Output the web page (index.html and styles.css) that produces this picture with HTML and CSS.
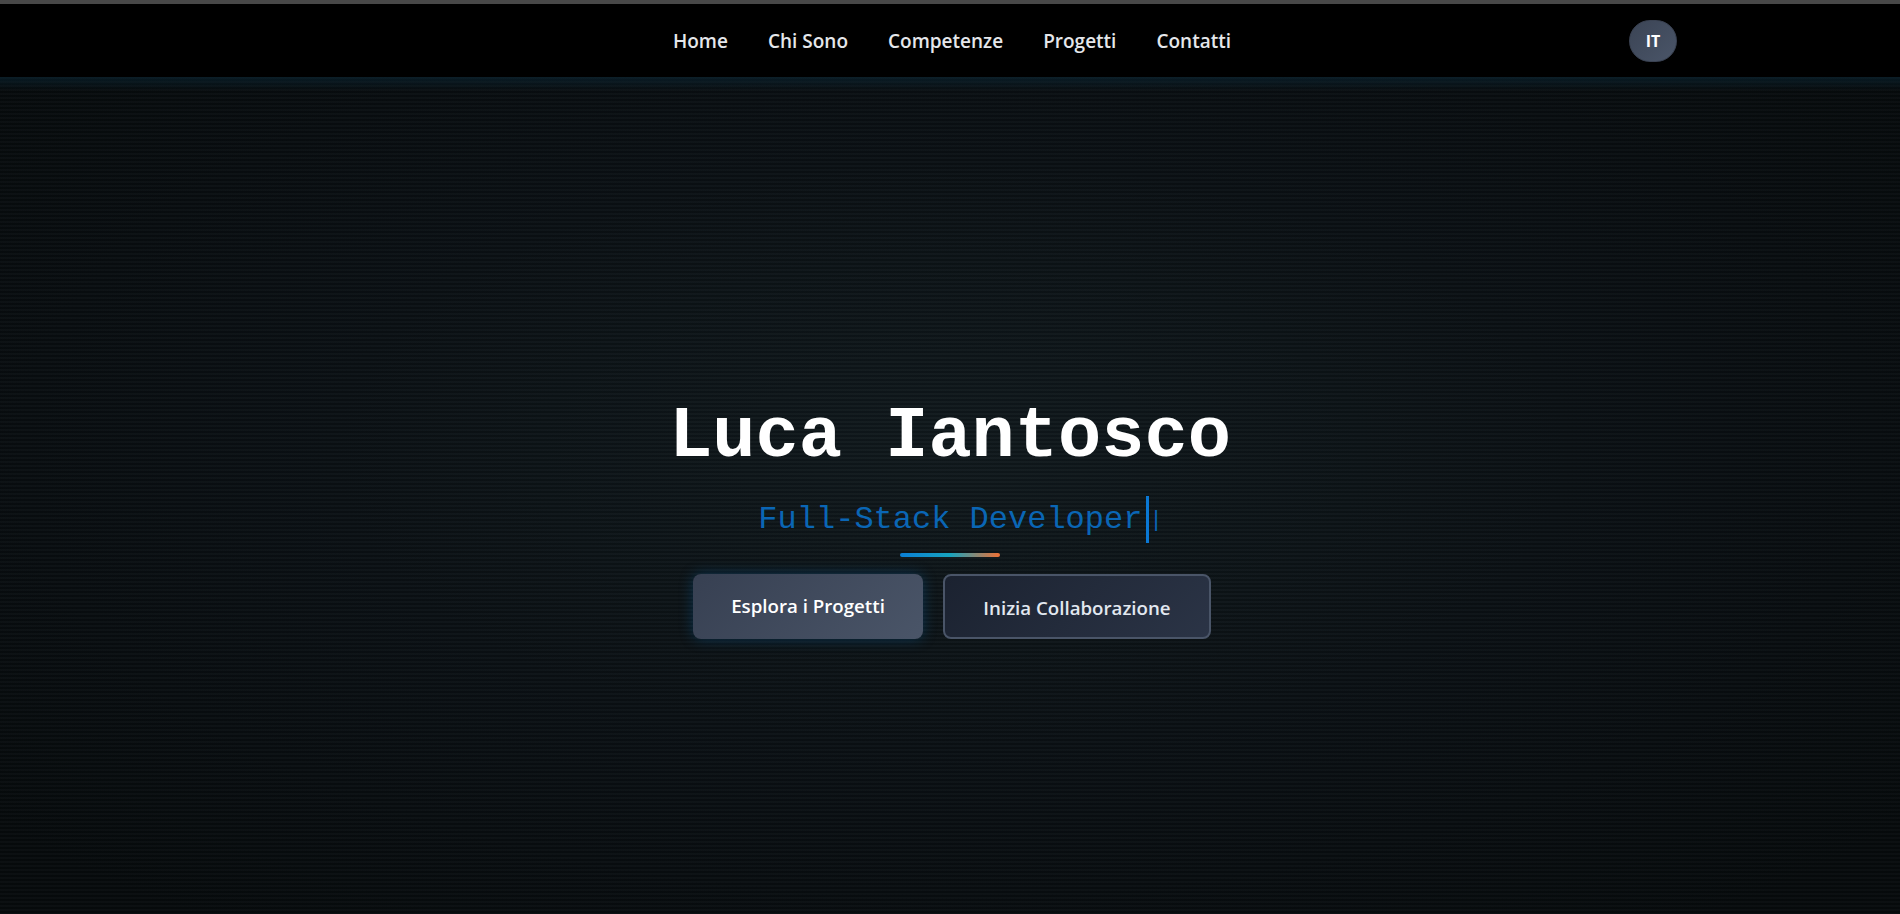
FILE: index.html
```html
<!DOCTYPE html>
<html lang="it">
<head>
<meta charset="utf-8">
<title>Luca Iantosco</title>
<link rel="stylesheet" href="styles.css">
</head>
<body>
<div class="topbar"></div>
<nav class="navbar">
  <div class="nav-side"></div>
  <ul class="nav-links">
    <li><a href="#home">Home</a></li>
    <li><a href="#about">Chi Sono</a></li>
    <li><a href="#skills">Competenze</a></li>
    <li><a href="#projects">Progetti</a></li>
    <li><a href="#contact">Contatti</a></li>
  </ul>
  <div class="nav-side nav-right">
    <button class="lang-btn">IT</button>
  </div>
</nav>
<main class="hero">
  <h1 class="hero-title">Luca Iantosco</h1>
  <div class="hero-sub">
    <span class="typed">Full-Stack Developer</span><span class="caret">|</span>
  </div>
  <div class="hero-line"></div>
  <div class="hero-actions">
    <a class="btn btn-primary" href="#projects">Esplora i Progetti</a>
    <a class="btn btn-outline" href="#contact">Inizia Collaborazione</a>
  </div>
</main>
</body>
</html>
```
FILE: styles.css
```css
* { box-sizing: border-box; }
html, body { margin: 0; padding: 0; }
body {
  background: #070b0d;
  font-family: "Open Sans", "Noto Sans", sans-serif;
  color: #fff;
  height: 914px;
  overflow: hidden;
}
.topbar {
  height: 4px;
  background: #484848;
}
.navbar {
  height: 73px;
  background: #000;
  display: grid;
  grid-template-columns: 1fr auto 1fr;
  align-items: center;
}
.nav-links {
  list-style: none;
  margin: 0;
  padding: 1px 0 0 4px;
  display: flex;
  gap: 40px;
}
.nav-links a {
  color: #e5e7eb;
  text-decoration: none;
  font-weight: 600;
  font-size: 19px;
  letter-spacing: 0;
}
.nav-right {
  display: flex;
  justify-content: flex-end;
  padding-right: 223px;
}
.lang-btn {
  width: 48px;
  height: 42px;
  border-radius: 21px;
  border: 1px solid #3a4252;
  background: linear-gradient(135deg, #3b4455, #4a5568);
  color: #fff;
  font-family: "Open Sans", sans-serif;
  font-weight: 700;
  font-size: 16px;
  padding: 0;
  margin-top: 1px;
}
.hero {
  height: 837px;
  display: flex;
  flex-direction: column;
  align-items: center;
  padding-top: 324px;
  background:
    linear-gradient(to bottom, rgba(10, 40, 55, 0.55) 0, rgba(10, 40, 55, 0) 14px),
    repeating-linear-gradient(to bottom, rgba(255, 255, 255, 0.018) 0 2px, rgba(0, 0, 0, 0.12) 2px 4px),
    radial-gradient(ellipse 65% 70% at 50% 45%, #111a1e 0%, #0b1115 50%, #070b0d 100%);
}
.hero-title {
  margin: 0;
  font-family: "Liberation Mono", "Courier New", monospace;
  font-weight: 700;
  font-size: 72px;
  line-height: 72px;
  color: #fff;
  letter-spacing: 0;
}
.hero-sub {
  margin-top: 23px;
  display: flex;
  align-items: center;
  padding-left: 21px;
}
.typed {
  font-family: "Liberation Mono", "Courier New", monospace;
  font-size: 32px;
  line-height: 47px;
  color: #0a66b5;
  padding-right: 4px;
  border-right: 3px solid #0a78d4;
}
.caret {
  font-family: "Liberation Mono", "Courier New", monospace;
  font-size: 22px;
  line-height: 22px;
  color: #0a66b5;
  margin-top: 2px;
}
.hero-line {
  width: 100px;
  height: 4px;
  margin-top: 10px;
  border-radius: 2px;
  background: linear-gradient(90deg, #0a7fd6 0%, #17a3be 50%, #f07034 100%);
}
.hero-actions {
  margin-top: 17px;
  margin-left: 4px;
  display: flex;
  gap: 20px;
}
.btn {
  display: flex;
  align-items: center;
  justify-content: center;
  height: 65px;
  border-radius: 8px;
  font-weight: 600;
  font-size: 18.7px;
  text-decoration: none;
}
.btn-primary {
  width: 230px;
  color: #fff;
  background: linear-gradient(135deg, #374052, #4a5568);
  box-shadow: 0 0 14px rgba(10, 110, 180, 0.35);
  padding-bottom: 3px;
}
.btn-outline {
  width: 268px;
  color: #e2e8f0;
  background: linear-gradient(135deg, #1b2230, #2b3446);
  border: 2px solid #4a5568;
  padding-top: 2px;
}
```
